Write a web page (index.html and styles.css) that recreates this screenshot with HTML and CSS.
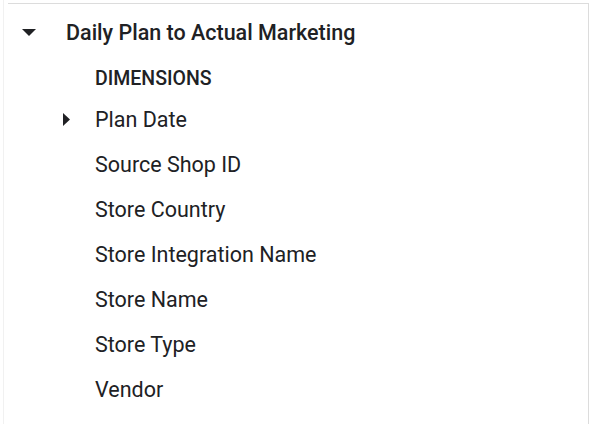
FILE: index.html
```html
<!DOCTYPE html>
<html>
<head>
<meta charset="utf-8">
<link rel="stylesheet" href="styles.css">
</head>
<body>
<div class="page">
  <div class="rail"></div>
  <div class="panel">
    <div class="group-row">
      <span class="caret caret-down">
        <svg width="14" height="7" viewBox="0 0 14 7"><path d="M0 0H14L7 7Z" fill="#202124"/></svg>
      </span>
      <span class="group-title">Daily Plan to Actual Marketing</span>
    </div>
    <div class="section-label">DIMENSIONS</div>
    <ul class="fields">
      <li class="field">
        <span class="caret caret-right">
          <svg width="7" height="13" viewBox="0 0 7 13"><path d="M0 0L7 6.5L0 13Z" fill="#202124"/></svg>
        </span>
        <span class="field-name">Plan Date</span>
      </li>
      <li class="field"><span class="caret"></span><span class="field-name">Source Shop ID</span></li>
      <li class="field"><span class="caret"></span><span class="field-name">Store Country</span></li>
      <li class="field"><span class="caret"></span><span class="field-name">Store Integration Name</span></li>
      <li class="field"><span class="caret"></span><span class="field-name">Store Name</span></li>
      <li class="field"><span class="caret"></span><span class="field-name">Store Type</span></li>
      <li class="field"><span class="caret"></span><span class="field-name">Vendor</span></li>
    </ul>
  </div>
</div>
</body>
</html>
```
FILE: styles.css
```css
html, body {
  margin: 0;
  padding: 0;
  background: #ffffff;
}
body {
  font-family: Roboto, "Liberation Sans", sans-serif;
  color: #202124;
}
.page {
  display: flex;
  height: 424px;
  overflow: hidden;
}
.rail {
  width: 3px;
  border-right: 1px solid #f1f1f1;
  margin-right: 4px;
}
.panel {
  width: 580px;
  margin-top: 3px;
  border-top: 1px solid #dcdcdc;
  border-right: 1px solid #dcdcdc;
}
.group-row {
  display: flex;
  align-items: center;
  height: 56px;
  padding-left: 14px;
}
.caret {
  display: flex;
  align-items: center;
  justify-content: center;
}
.caret-down {
  width: 14px;
  margin-right: 30px;
}
.group-title {
  font-size: 21.5px;
  font-weight: 500;
}
.section-label {
  font-size: 19.5px;
  font-weight: 500;
  padding-left: 87px;
  height: 37px;
  line-height: 37px;
}
.fields {
  list-style: none;
  margin: 0;
  padding: 0;
}
.field {
  display: flex;
  align-items: center;
  height: 45px;
  padding-left: 55px;
}
.field .caret {
  width: 7px;
  margin-right: 25px;
}
.field-name {
  font-size: 21.5px;
}
```
